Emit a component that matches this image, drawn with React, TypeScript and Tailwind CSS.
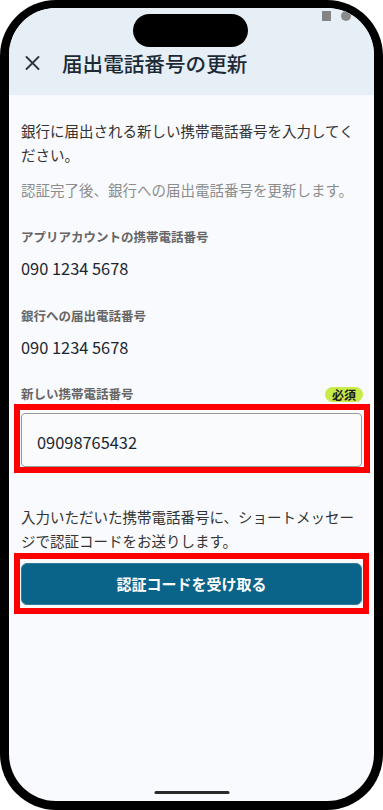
import React from 'react'

const jp = { fontFamily: '"Noto Sans CJK JP", "Noto Sans", sans-serif' }

// red annotation frame laid over a highlighted element
function Highlight({ className }: { className: string }) {
  return <div className={`pointer-events-none absolute border-[6px] border-[#ff0000] ${className}`} />
}

function CloseIcon() {
  return (
    <svg width="15" height="14" viewBox="0 0 15 14" fill="none">
      <path d="M1.5 1L13.5 13M13.5 1L1.5 13" stroke="#2f3438" strokeWidth="1.8" strokeLinecap="round" />
    </svg>
  )
}

export default function App() {
  return (
    <div className="h-[810px] w-[383px] bg-white" style={jp}>
      <div className="h-full w-full rounded-[56px] bg-black px-[9px] pb-[9px] pt-[8px]">
        <div className="relative flex h-full w-full flex-col overflow-hidden rounded-[47px] bg-[#f9fafd]">
          {/* header */}
          <header className="h-[87px] shrink-0 bg-[#e6eef6] pl-[16px] pt-[42px]">
            <div className="flex h-[26px] items-center">
              <CloseIcon />
              <h1 className="ml-[22px] text-[20.6px] font-medium leading-[26px] text-[#1c2a36]">届出電話番号の更新</h1>
            </div>
          </header>

          {/* dynamic island + status dots */}
          <div className="absolute left-[124px] top-[6px] h-[33px] w-[115px] rounded-full bg-black" />
          <div className="absolute left-[313px] top-[3px] h-[10px] w-[9px] bg-[#858585]" />
          <div className="absolute left-[332px] top-[3px] h-[10px] w-[10px] rounded-full bg-[#8a8a8a]" />

          <main className="flex flex-col px-[12px] pt-[24px]">
            <p className="text-[14.5px] leading-[24px] text-[#333333]">
              銀行に届出される新しい携帯電話番号を入力してください。
            </p>
            <p className="mt-[11px] text-[14.5px] leading-[24px] text-[#8c8c8c]">
              認証完了後、銀行への届出電話番号を更新します。
            </p>

            <div className="mt-[26px] text-[12.5px] font-bold leading-[18px] text-[#666666]">アプリアカウントの携帯電話番号</div>
            <div className="mt-[10px] text-[16.4px] leading-[24px] text-[#1a2630]">090 1234 5678</div>

            <div className="mt-[27px] text-[12.5px] font-bold leading-[18px] text-[#666666]">銀行への届出電話番号</div>
            <div className="mt-[10px] text-[16.4px] leading-[24px] text-[#1a2630]">090 1234 5678</div>

            <div className="mt-[26px] flex items-center justify-between">
              <span className="text-[12.5px] font-bold leading-[18px] text-[#666666]">新しい携帯電話番号</span>
              <span className="-mr-[1px] rounded-full bg-[#c8eb4a] px-[7px] text-[12px] font-bold leading-[15px] text-[#1a1a1a]">必須</span>
            </div>

            <div className="relative mt-[10px]">
              <div className="flex h-[54px] items-center rounded-[4px] border border-[#9a9a9a] bg-[#fafbfd] px-[15px] pt-[4px] text-[16.4px] text-[#1a2630]">
                09098765432
              </div>
              <Highlight className="-left-[7px] -right-[8px] -top-[9px] -bottom-[6px]" />
            </div>

            <p className="mt-[38px] text-[14.5px] leading-[24px] text-[#333333]">
              入力いただいた携帯電話番号に、ショートメッセージで認証コードをお送りします。
            </p>

            <div className="relative mt-[10px]">
              <button className="flex h-[42px] w-full items-center justify-center rounded-[6px] border border-[#2f7aa0] bg-[#0a6389] text-[15px] font-bold text-white">
                認証コードを受け取る
              </button>
              <Highlight className="-left-[7px] -right-[7px] -top-[10px] -bottom-[9px]" />
            </div>
          </main>

          {/* home indicator */}
          <div className="absolute bottom-[7px] left-1/2 h-[3px] w-[75px] -translate-x-1/2 rounded-full bg-[#2a2a2a]" />
        </div>
      </div>
    </div>
  )
}
